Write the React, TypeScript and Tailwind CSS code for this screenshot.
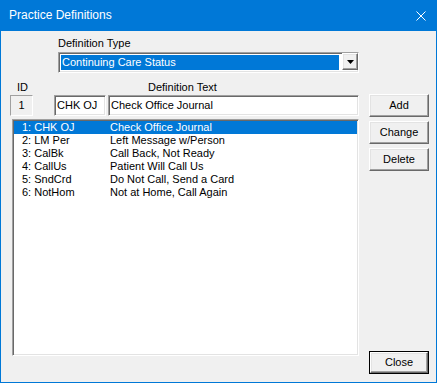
import React from "react";

const sunken =
  "border border-t-[#a0a0a0] border-l-[#a0a0a0] border-r-white border-b-white shadow-[inset_1px_1px_0_#696969,inset_-1px_-1px_0_#e3e3e3]";
const raised =
  "border border-t-white border-l-white border-r-[#696969] border-b-[#696969] shadow-[inset_-1px_-1px_0_#a0a0a0,inset_1px_1px_0_#e3e3e3] bg-[#f0f0f0]";

function Btn({ label, className = "" }: { label: string; className?: string }) {
  return (
    <div className={`h-[23px] w-[60px] flex items-center justify-center ${raised} ${className}`}>
      {label}
    </div>
  );
}

export default function App() {
  const rows = [
    ["1: CHK OJ", "Check Office Journal"],
    ["2: LM Per", "Left Message w/Person"],
    ["3: CalBk", "Call Back, Not Ready"],
    ["4: CallUs", "Patient Will Call Us"],
    ["5: SndCrd", "Do Not Call, Send a Card"],
    ["6: NotHom", "Not at Home, Call Again"],
  ];
  return (
    <div className="w-[437px] h-[383px] bg-[#0078d7] flex flex-col px-[1px] pb-[1px] font-['Liberation_Sans',Arial,sans-serif] text-[11px] leading-[13px] text-black">
      <div className="h-[31px] shrink-0 flex items-center justify-between pl-[8px] pr-[10px] text-white text-[12px] leading-[15px]">
        <span>Practice Definitions</span>
        <svg width="10" height="10" viewBox="0 0 10 10">
          <path d="M0.5 0.5 L9.5 9.5 M9.5 0.5 L0.5 9.5" stroke="white" strokeWidth="1" />
        </svg>
      </div>
      <div className="flex-1 bg-[#f0f0f0] flex pl-[9px]">
        <div className="w-[349px] flex flex-col">
          <div className="mt-[6px] pl-[48px] h-[13px]">Definition Type</div>
          <div className={`mt-[2px] ml-[48px] w-[301px] h-[21px] bg-white flex ${sunken}`}>
            <div className="flex w-full p-[1px]">
              <div className="my-[1px] ml-[1px] w-[278px] bg-[#0078d7] text-white flex items-center pl-[1px]">
                Continuing Care Status
              </div>
              <div className={`ml-auto w-[16px] h-[17px] -m-[1px] flex items-center justify-center ${raised}`}>
                <svg width="7" height="4" viewBox="0 0 7 4">
                  <path d="M0 0 H7 L3.5 4 Z" fill="black" />
                </svg>
              </div>
            </div>
          </div>
          <div className="mt-[8px] flex h-[13px]">
            <span className="ml-[7px] w-[131px]">ID</span>
            <span>Definition Text</span>
          </div>
          <div className="mt-[1px] flex h-[21px]">
            <div className="w-[23px] h-[21px] flex items-center justify-center border border-t-[#a0a0a0] border-l-[#a0a0a0] border-r-white border-b-white">
              1
            </div>
            <div className={`ml-[21px] w-[52px] h-[21px] bg-white flex items-center pl-[2px] ${sunken}`}>
              CHK OJ
            </div>
            <div className={`ml-[2px] w-[251px] h-[21px] bg-white flex items-center pl-[2px] ${sunken}`}>
              Check Office Journal
            </div>
          </div>
          <div className={`mt-[3px] ml-[2px] w-[347px] h-[237px] bg-white p-[1px] ${sunken}`}>
            {rows.map(([a, b], i) => (
              <div
                key={a}
                className={`h-[13px] flex pl-[8px] whitespace-nowrap ${i === 0 ? "bg-[#0078d7] text-white" : ""}`}
              >
                <span className="w-[88px]">{a}</span>
                <span>{b}</span>
              </div>
            ))}
          </div>
        </div>
        <div className="ml-[10px] w-[60px] flex flex-col">
          <Btn label="Add" className="mt-[63px]" />
          <Btn label="Change" className="mt-[4px]" />
          <Btn label="Delete" className="mt-[4px]" />
          <div className="mt-auto mb-[8px] h-[23px] w-[60px] border border-black flex">
            <div className={`flex-1 flex items-center justify-center ${raised}`}>Close</div>
          </div>
        </div>
      </div>
    </div>
  );
}
